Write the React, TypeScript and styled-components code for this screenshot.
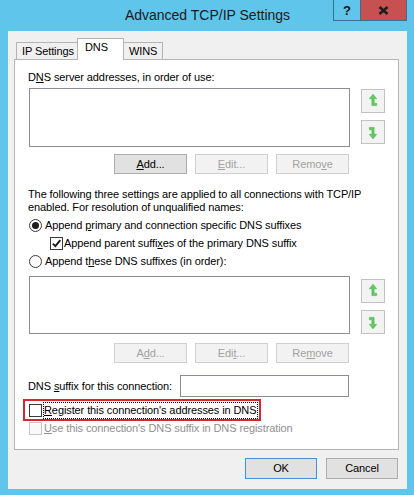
import React from "react";
import styled, { createGlobalStyle } from "styled-components";

const GlobalStyle = createGlobalStyle`
  html, body { margin: 0; padding: 0; background: #ffffff; }
  body {
    font-family: "Liberation Sans", Arial, sans-serif;
    font-size: 11px;
    color: #000;
  }
  #root { width: 414px; height: 495px; }
`;

const Window = styled.div`
  width: 414px;
  height: 495px;
  box-sizing: border-box;
  background: #5fc5ea;
  padding: 0 7px 6px 8px;
  display: flex;
  flex-direction: column;
  letter-spacing: -0.1px;
`;

const TitleBar = styled.div`
  height: 31px;
  flex: none;
  display: grid;
  grid-template-columns: 1fr auto 1fr;
  align-items: start;
`;

const Title = styled.div`
  grid-column: 2;
  font-size: 14px;
  line-height: 31px;
  color: #1b1b1b;
  letter-spacing: 0;
  white-space: nowrap;
`;

const Controls = styled.div`
  grid-column: 3;
  justify-self: end;
  display: flex;
`;

const CtrlButton = styled.div<{ $close?: boolean }>`
  width: ${(p) => (p.$close ? 46 : 28)}px;
  height: 21px;
  box-sizing: border-box;
  display: flex;
  align-items: center;
  justify-content: center;
  background: ${(p) => (p.$close ? "#c75050" : "transparent")};
  border: 1px solid #3b6f90;
  border-top: none;
  ${(p) => (p.$close ? "border-left: none;" : "")}
  font-weight: bold;
  font-size: 13px;
  color: #111;
`;

const Client = styled.div`
  flex: 1;
  background: #f0f0f0;
  padding: 7px 8px 0 6px;
  display: flex;
  flex-direction: column;
`;

const TabStrip = styled.div`
  height: 21px;
  flex: none;
  display: flex;
  align-items: flex-end;
  padding-left: 2px;
`;

const Tab = styled.div<{ $active?: boolean; $w: number }>`
  width: ${(p) => p.$w}px;
  box-sizing: border-box;
  height: ${(p) => (p.$active ? 22 : 17)}px;
  margin: ${(p) => (p.$active ? "0 -1px -1px -1px" : "0")};
  padding: ${(p) => (p.$active ? "1px 0 0 7px" : "1px 0 0 5px")};
  line-height: 14px;
  border: 1px solid #b4b4b4;
  border-bottom: none;
  background: ${(p) => (p.$active ? "#ffffff" : "#f0f0f0")};
  position: relative;
  z-index: ${(p) => (p.$active ? 1 : 0)};
  white-space: nowrap;
`;

const Panel = styled.div`
  height: 391px;
  flex: none;
  box-sizing: border-box;
  border: 1px solid #b4b4b4;
  background: #ffffff;
  padding: 10px 0 0 13px;
  display: flex;
  flex-direction: column;
`;

const Label = styled.div`
  line-height: 14px;
  white-space: nowrap;
`;

const ListRow = styled.div<{ $top: number }>`
  display: flex;
  margin: ${(p) => p.$top}px 0 0 1px;
`;

const ListBox = styled.div<{ $h: number }>`
  width: 321px;
  height: ${(p) => p.$h}px;
  box-sizing: border-box;
  border: 1px solid #8a8d94;
  background: #fff;
`;

const ArrowCol = styled.div<{ $top: number }>`
  display: flex;
  flex-direction: column;
  gap: 7px;
  margin: ${(p) => p.$top}px 0 0 11px;
`;

const ArrowBtn = styled.div`
  width: 24px;
  height: 24px;
  box-sizing: border-box;
  border: 1px solid #c2c2c2;
  background: #f3f3f3;
  display: flex;
  align-items: center;
  justify-content: center;
`;

const ButtonRow = styled.div<{ $top: number }>`
  display: flex;
  justify-content: flex-end;
  gap: 8px;
  width: 321px;
  margin: ${(p) => p.$top}px 0 0 0;
`;

type BtnState = "normal" | "disabled" | "default";

const PushButton = styled.div<{ $w: number; $h: number; $state: BtnState }>`
  width: ${(p) => p.$w}px;
  height: ${(p) => p.$h}px;
  box-sizing: border-box;
  border: 1px solid
    ${(p) =>
      p.$state === "disabled" ? "#d0d0d0" : p.$state === "default" ? "#4a8ed0" : "#acacac"};
  background: ${(p) => (p.$state === "disabled" ? "#f2f2f2" : "#e1e1e1")};
  color: ${(p) => (p.$state === "disabled" ? "#a2a2a2" : "#000")};
  text-align: center;
  line-height: ${(p) => p.$h - 2}px;
  white-space: nowrap;
`;

const Para = styled.div`
  margin-top: 14px;
  line-height: 13px;
  white-space: nowrap;
`;

const OptionRow = styled.div<{ $top: number; $indent: number; $gap: number; $h?: number; $dim?: boolean }>`
  display: flex;
  align-items: center;
  height: ${(p) => p.$h ?? 16}px;
  margin-top: ${(p) => p.$top}px;
  padding-left: ${(p) => p.$indent}px;
  gap: ${(p) => p.$gap}px;
  color: ${(p) => (p.$dim ? "#8f8f8f" : "#000")};
  white-space: nowrap;
`;

const Radio = styled.span<{ $on?: boolean }>`
  width: 13px;
  height: 13px;
  box-sizing: border-box;
  border: 1px solid #3a3a3a;
  border-radius: 50%;
  background: #fff;
  display: flex;
  align-items: center;
  justify-content: center;
  flex: none;
  &::after {
    content: "";
    display: ${(p) => (p.$on ? "block" : "none")};
    width: 7px;
    height: 7px;
    border-radius: 50%;
    background: #1c1c1c;
  }
`;

const Check = styled.span<{ $dim?: boolean }>`
  width: 13px;
  height: 13px;
  box-sizing: border-box;
  border: 1px solid ${(p) => (p.$dim ? "#c6c6c6" : "#3a3a3a")};
  background: ${(p) => (p.$dim ? "#f9f9f9" : "#fff")};
  display: flex;
  align-items: center;
  justify-content: center;
  flex: none;
`;

const SuffixRow = styled.div`
  display: flex;
  align-items: center;
  justify-content: space-between;
  width: 321px;
  margin-top: 12px;
  white-space: nowrap;
`;

const TextInput = styled.div`
  width: 169px;
  height: 22px;
  box-sizing: border-box;
  border: 1px solid #8a8d94;
  background: #fff;
`;

const Highlight = styled.div`
  align-self: flex-start;
  display: flex;
  align-items: center;
  height: 22px;
  box-sizing: border-box;
  border: 2px solid #d8262c;
  margin: 2px 0 0 -5px;
  padding: 0 1px 0 4px;
  white-space: nowrap;
`;

const FocusText = styled.span`
  margin-left: 1px;
  border: 1px dotted #000;
  line-height: 15px;
  padding: 0 1px 0 0;
`;

const Footer = styled.div`
  display: flex;
  justify-content: flex-end;
  gap: 9px;
  margin-top: 8px;
  padding-right: 1px;
`;

const green = "#5fcc5f";

const UpIcon = () => (
  <svg width="24" height="24" viewBox="0 0 24 24">
    <path
      d="M12 4.5 L16 9.5 H13.2 V14.5 H16 V17 H10.8 V9.5 H8 Z"
      fill={green}
      stroke="#45b345"
      strokeWidth="0.6"
    />
  </svg>
);

const DownIcon = () => (
  <svg width="24" height="24" viewBox="0 0 24 24">
    <path
      d="M12 19.5 L8 14.5 H10.8 V9.5 H8 V7 H13.2 V14.5 H16 Z"
      fill={green}
      stroke="#45b345"
      strokeWidth="0.6"
    />
  </svg>
);

const CheckMark = () => (
  <svg width="11" height="11" viewBox="0 0 11 11">
    <path d="M1.8 5.6 L4.4 8.2 L9.3 2.2" fill="none" stroke="#1a1a1a" strokeWidth="1.9" />
  </svg>
);

const CloseX = () => (
  <svg width="11" height="9" viewBox="0 0 11 9">
    <path d="M1.5 1 L9.5 8 M9.5 1 L1.5 8" stroke="#1e1e1e" strokeWidth="2.6" />
  </svg>
);

const Arrows: React.FC<{ top: number }> = ({ top }) => (
  <ArrowCol $top={top}>
    <ArrowBtn>
      <UpIcon />
    </ArrowBtn>
    <ArrowBtn>
      <DownIcon />
    </ArrowBtn>
  </ArrowCol>
);

export default function App() {
  return (
    <>
      <GlobalStyle />
      <Window>
        <TitleBar>
          <Title>Advanced TCP/IP Settings</Title>
          <Controls>
            <CtrlButton>?</CtrlButton>
            <CtrlButton $close>
              <CloseX />
            </CtrlButton>
          </Controls>
        </TitleBar>
        <Client>
          <TabStrip>
            <Tab $w={62}>IP Settings</Tab>
            <Tab $w={47} $active>
              DNS
            </Tab>
            <Tab $w={40}>WINS</Tab>
          </TabStrip>
          <Panel>
            <Label>
              D<u>N</u>S server addresses, in order of use:
            </Label>
            <ListRow $top={4}>
              <ListBox $h={59} />
              <Arrows top={1} />
            </ListRow>
            <ButtonRow $top={7}>
              <PushButton $w={73} $h={20} $state="normal">
                <u>A</u>dd...
              </PushButton>
              <PushButton $w={73} $h={20} $state="disabled">
                <u>E</u>dit...
              </PushButton>
              <PushButton $w={73} $h={20} $state="disabled">
                Remo<u>v</u>e
              </PushButton>
            </ButtonRow>
            <Para>
              The following three settings are applied to all connections with TCP/IP
              <br />
              enabled. For resolution of unqualified names:
            </Para>
            <OptionRow $top={3} $indent={1} $gap={3}>
              <Radio $on />
              <span>
                Append <u>p</u>rimary and connection specific DNS suffixes
              </span>
            </OptionRow>
            <OptionRow $top={2} $indent={22} $gap={1}>
              <Check>
                <CheckMark />
              </Check>
              <span>
                Append parent suffi<u>x</u>es of the primary DNS suffix
              </span>
            </OptionRow>
            <OptionRow $top={2} $indent={1} $gap={3}>
              <Radio />
              <span>
                Append t<u>h</u>ese DNS suffixes (in order):
              </span>
            </OptionRow>
            <ListRow $top={7}>
              <ListBox $h={58} />
              <Arrows top={3} />
            </ListRow>
            <ButtonRow $top={9}>
              <PushButton $w={73} $h={20} $state="disabled">
                A<u>d</u>d...
              </PushButton>
              <PushButton $w={73} $h={20} $state="disabled">
                Edi<u>t</u>...
              </PushButton>
              <PushButton $w={73} $h={20} $state="disabled">
                Re<u>m</u>ove
              </PushButton>
            </ButtonRow>
            <SuffixRow>
              <span>
                DNS <u>s</u>uffix for this connection:
              </span>
              <TextInput />
            </SuffixRow>
            <Highlight>
              <Check />
              <FocusText>
                <u>R</u>egister this connection's addresses in DNS
              </FocusText>
            </Highlight>
            <OptionRow $top={0} $indent={1} $gap={2} $h={14} $dim>
              <Check $dim />
              <span>
                <u>U</u>se this connection's DNS suffix in DNS registration
              </span>
            </OptionRow>
          </Panel>
          <Footer>
            <PushButton $w={72} $h={21} $state="default">
              OK
            </PushButton>
            <PushButton $w={72} $h={21} $state="normal">
              Cancel
            </PushButton>
          </Footer>
        </Client>
      </Window>
    </>
  );
}
